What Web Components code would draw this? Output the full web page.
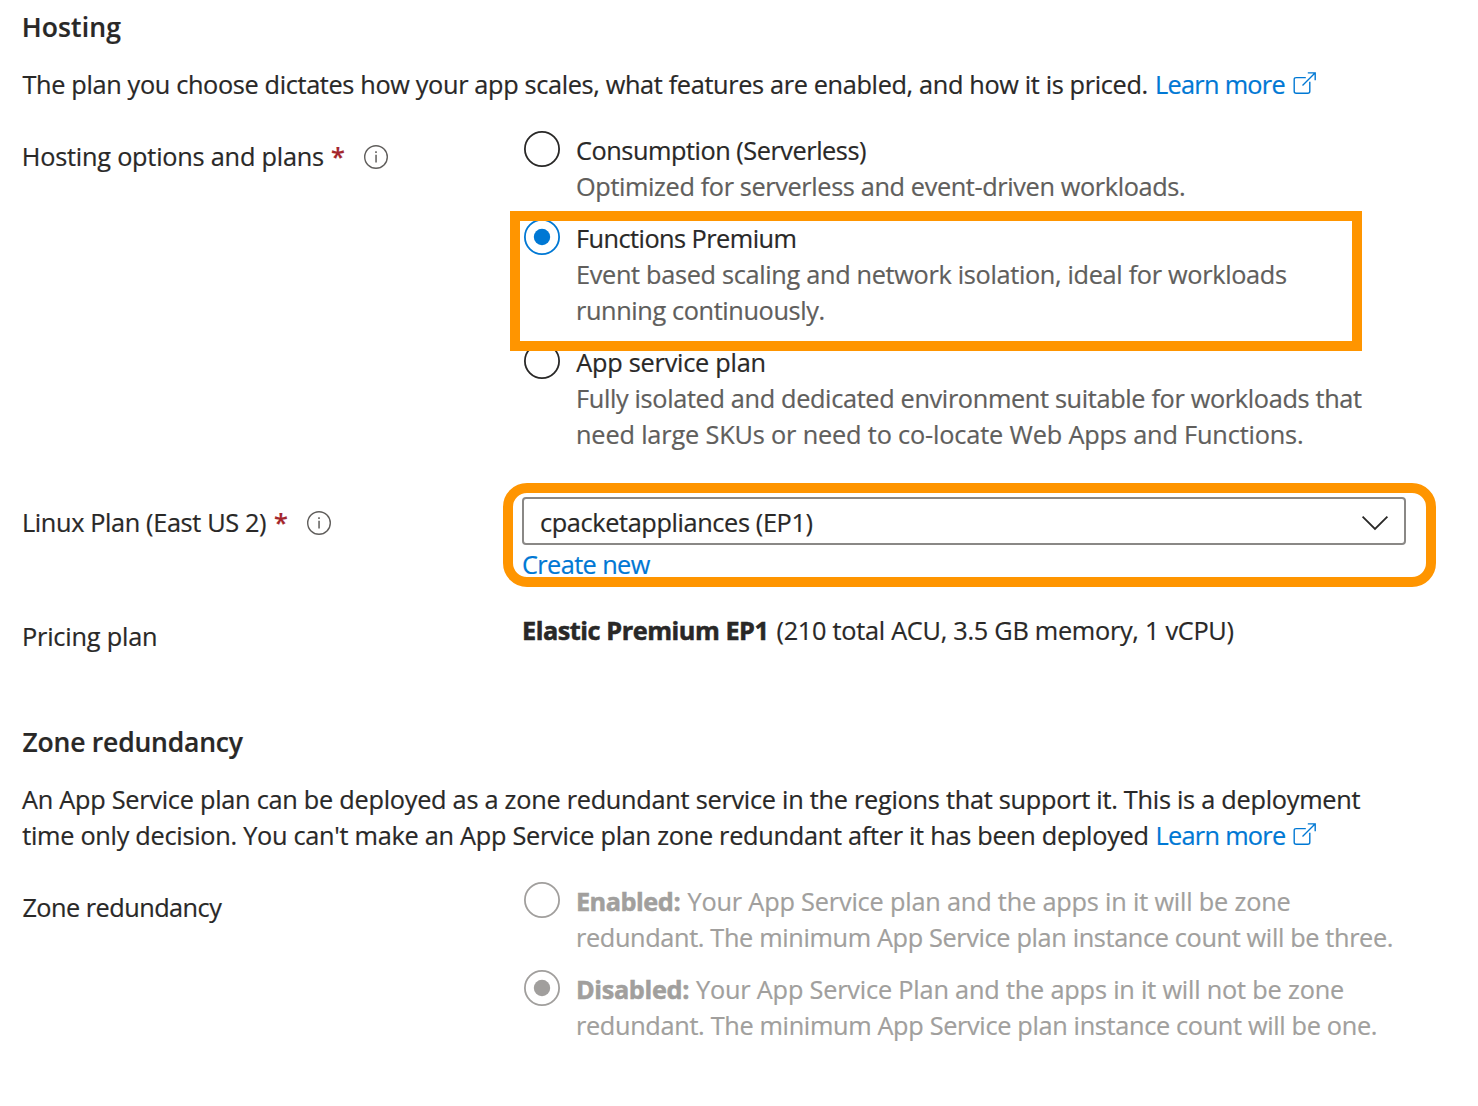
<!DOCTYPE html>
<html lang="en">
<head>
<meta charset="utf-8">
<title>Hosting</title>
<style>
html,body{margin:0;background:#fff}
body{font:25.3px/36px "Open Sans","Noto Sans",sans-serif;color:#292827;-webkit-text-stroke:.2px currentColor}
</style>
</head>
<body>
<hosting-page></hosting-page>
<script>
const define = (name, html, setup) => customElements.define(name, class extends HTMLElement {
  constructor() {
    super();
    this.attachShadow({mode: 'open'}).innerHTML = html;
  }
  connectedCallback() { if (setup) setup(this, this.shadowRoot); }
});

// A run of text whose glyphs start `lead` px after the previous item and span `w` px.
const pen = document.createElement('canvas').getContext('2d');
define('text-run', `<style>:host{display:block;white-space:pre;height:36px;width:var(--w);margin-left:var(--lead,0px)}
  :host([tone=link]){color:#0078d4}
  :host([tone=muted]){color:#605e5c}
  :host([weight=semi]){font-weight:600;font-size:26.5px}
  :host([weight=bold]){font-weight:700;-webkit-text-stroke-width:.5px}
  span{display:block;width:max-content}</style><span><slot></slot></span>`, (el, root) => {
  const text = el.textContent, w = +el.getAttribute('w');
  const cs = getComputedStyle(el);
  pen.font = `${cs.fontWeight} ${cs.fontSize} ${cs.fontFamily}`;
  const m = pen.measureText(text);
  const ink = m.actualBoundingBoxRight + m.actualBoundingBoxLeft;
  const span = root.querySelector('span');
  span.style.letterSpacing = ((w - ink) / (text.length - 1)).toFixed(4) + 'px';
  span.style.marginLeft = m.actualBoundingBoxLeft.toFixed(2) + 'px';
  el.style.setProperty('--w', w + 'px');
  el.style.setProperty('--lead', (el.getAttribute('lead') || 0) + 'px');
});

define('text-line', `<style>:host{display:flex;height:36px}</style><slot></slot>`);

define('external-icon', `<style>:host{display:block;width:24px;height:24px;margin:5px 0 0 8px}svg{display:block}</style>
  <svg width="24" height="24" viewBox="0 0 24 24" fill="none" stroke="#0078d4" stroke-width="1.4">
  <path d="M12.8 6.6H3.2Q1.2 6.6 1.2 8.6V20.2Q1.2 22.2 3.2 22.2H14.8Q16.8 22.2 16.8 20.2V10.8"/>
  <path d="M9.5 14.5L22 2M14.8 1.9H22.2V9.3"/></svg>`);

define('info-icon', `<style>:host{display:block;width:24px;height:24px;margin:7px 0 0 20px}svg{display:block}</style>
  <svg width="24" height="24" viewBox="0 0 24 24"><circle cx="12" cy="12" r="11.3" fill="none" stroke="#605e5c" stroke-width="1.4"/>
  <path d="M11.3 9.8h1.5v7.7h-1.5zM11.2 6.3h1.6v1.6h-1.6z" fill="#605e5c"/></svg>`);

define('required-mark', `<style>:host{display:block;width:12px;color:#a4262c;margin-left:9px;font-weight:600}
  span{display:block;margin-left:-1px}</style><span>*</span>`);

define('form-row', `<style>:host{display:grid;grid-template-columns:500px 1fr;margin-top:var(--gap);padding-left:22px}
  .label{padding-top:var(--label-top,6px)}</style>
  <div class="label"><slot name="label"></slot></div><div><slot></slot></div>`);

define('text-block', `<style>:host{display:block;padding-left:22px;margin-top:var(--gap)}</style><slot></slot>`);

define('radio-group', `<style>:host{display:flex;flex-direction:column;gap:16px}</style><slot></slot>`);

define('radio-option', `<style>
  :host{display:grid;grid-template-columns:36px 1fr;column-gap:16px;padding-left:2px;position:relative;--c:#292827}
  :host([checked]){--c:#0078d4}
  :host([disabled]){--c:#a19f9d;color:#a19f9d}
  svg{display:block;margin-top:-1px}
  .dot{display:none}:host([checked]) .dot{display:block}</style>
  <svg width="36" height="36" viewBox="0 0 36 36"><circle cx="18" cy="18" r="17.1" fill="none" stroke="var(--c)" stroke-width="1.8"/>
  <circle class="dot" cx="18" cy="18" r="8.2" fill="var(--c)"/></svg>
  <div><slot></slot></div><slot name="mark"></slot>`);

// Annotation frame drawn above the controls it surrounds.
define('highlight-frame', `<style>:host{position:absolute;box-sizing:border-box;border:10px solid #ff9500;z-index:2;pointer-events:none}
  :host([kind=option]){left:-12px;top:-9px;width:852px;height:140px}
  :host([kind=field]){left:-19px;top:-14px;width:933px;height:104px;border-radius:24px}</style>`);

define('plan-select', `<style>:host{display:flex;justify-content:space-between;box-sizing:border-box;width:884px;height:48px;
  border:2px solid #8a8886;border-radius:4px;padding:5px 15px 0 17px}svg{display:block;margin-top:11px}</style>
  <slot></slot><svg width="28" height="16" viewBox="0 0 28 16" fill="none" stroke="#292827" stroke-width="1.8"><path d="M1.6 1.6L14 14L26.4 1.6"/></svg>`);

define('select-field', `<style>:host{display:block;position:relative}.below{padding-top:1px}</style>
  <slot></slot><div class="below"><slot name="below"></slot></div><slot name="mark"></slot>`);

define('hosting-page', `<style>:host{display:flow-root;box-sizing:border-box;width:1478px;height:1106px;background:#fff;overflow:hidden}</style>
<text-block style="--gap:9px"><text-run lead="1.7" w="97.5" weight="semi">Hosting</text-run></text-block>
<text-block style="--gap:21px"><text-line><text-run lead=".5" w="1124">The plan you choose dictates how your app scales, what features are enabled, and how it is priced.</text-run><text-run lead="10.5" w="127.5" tone="link">Learn more</text-run><external-icon></external-icon></text-line></text-block>
<form-row style="--gap:30px">
  <text-line slot="label"><text-run lead="1.8" w="299.2">Hosting options and plans</text-run><required-mark></required-mark><info-icon></info-icon></text-line>
  <radio-group>
    <radio-option><text-run lead="1" w="289">Consumption (Serverless)</text-run><text-run lead="1" w="607" tone="muted">Optimized for serverless and event-driven workloads.</text-run></radio-option>
    <radio-option checked><text-run lead="2" w="217.5">Functions Premium</text-run><text-run lead="2" w="708" tone="muted">Event based scaling and network isolation, ideal for workloads</text-run><text-run lead="2" w="245.5" tone="muted">running continuously.</text-run><highlight-frame slot="mark" kind="option"></highlight-frame></radio-option>
    <radio-option><text-run lead=".3" w="188.2">App service plan</text-run><text-run lead="2" w="784" tone="muted">Fully isolated and dedicated environment suitable for workloads that</text-run><text-run lead="2" w="724" tone="muted">need large SKUs or need to co-locate Web Apps and Functions.</text-run></radio-option>
  </radio-group>
</form-row>
<form-row style="--gap:45px;--label-top:7px">
  <text-line slot="label"><text-run lead="2" w="242">Linux Plan (East US 2)</text-run><required-mark></required-mark><info-icon></info-icon></text-line>
  <select-field><plan-select><text-run w="271.5">cpacketappliances (EP1)</text-run></plan-select>
  <text-run slot="below" lead="1" w="127.7" tone="link">Create new</text-run><highlight-frame slot="mark" kind="field"></highlight-frame></select-field>
</form-row>
<form-row style="--gap:30px">
  <text-run slot="label" lead="2" w="132">Pricing plan</text-run>
  <text-line><text-run lead="2" w="241.5" weight="bold">Elastic Premium EP1</text-run><text-run lead="12" w="456">(210 total ACU, 3.5 GB memory, 1 vCPU)</text-run></text-line>
</form-row>
<text-block style="--gap:70px"><text-run lead=".5" w="221.2" weight="semi">Zone redundancy</text-run></text-block>
<text-block style="--gap:21px">
  <text-run w="1338.5">An App Service plan can be deployed as a zone redundant service in the regions that support it. This is a deployment</text-run>
  <text-line><text-run lead=".2" w="1125.3">time only decision. You can't make an App Service plan zone redundant after it has been deployed</text-run><text-run lead="10" w="127.5" tone="link">Learn more</text-run><external-icon></external-icon></text-line>
</text-block>
<form-row style="--gap:30px">
  <text-run slot="label" lead=".4" w="199.8">Zone redundancy</text-run>
  <radio-group>
    <radio-option disabled><text-line><text-run lead="1.9" w="101.5" weight="bold">Enabled:</text-run><text-run lead="8.1" w="602">Your App Service plan and the apps in it will be zone</text-run></text-line><text-run lead="2" w="813.8">redundant. The minimum App Service plan instance count will be three.</text-run></radio-option>
    <radio-option checked disabled><text-line><text-run lead="1.9" w="110.3" weight="bold">Disabled:</text-run><text-run lead="7.8" w="647">Your App Service Plan and the apps in it will not be zone</text-run></text-line><text-run lead="2" w="797.8">redundant. The minimum App Service plan instance count will be one.</text-run></radio-option>
  </radio-group>
</form-row>`);
</script>
</body>
</html>
